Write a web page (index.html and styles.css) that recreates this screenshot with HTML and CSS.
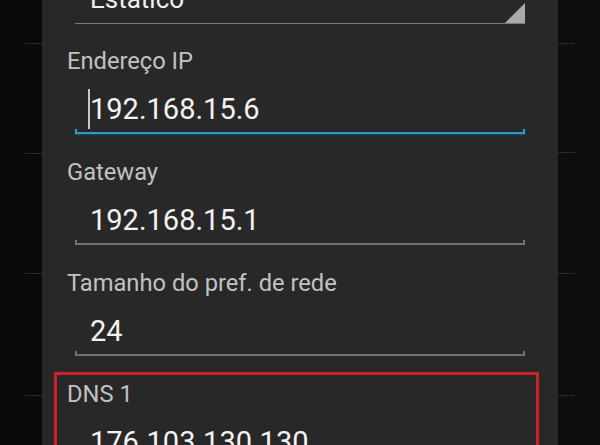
FILE: index.html
```html
<!DOCTYPE html>
<html lang="pt">
<head>
<meta charset="utf-8">
<title>IP estático</title>
<link rel="stylesheet" href="styles.css">
</head>
<body>
<div class="screen">
  <div class="gutter gutter-left"></div>
  <div class="panel">
    <div class="spinner">
      <span class="spinner-text">Estático</span>
      <svg class="spinner-arrow" width="20" height="20" viewBox="0 0 20 20"><polygon points="20,0 20,20 0,20" fill="#a9a9a9"/></svg>
    </div>
    <div class="field first">
      <div class="label">Endereço IP</div>
      <div class="input">
        <div class="value"><span class="cursor"></span>192.168.15.6</div>
        <div class="line active"></div>
      </div>
    </div>
    <div class="field">
      <div class="label">Gateway</div>
      <div class="input">
        <div class="value">192.168.15.1</div>
        <div class="line"></div>
      </div>
    </div>
    <div class="field">
      <div class="label">Tamanho do pref. de rede</div>
      <div class="input">
        <div class="value">24</div>
        <div class="line"></div>
      </div>
    </div>
    <div class="field highlight">
      <div class="label">DNS 1</div>
      <div class="input">
        <div class="value">176.103.130.130</div>
        <div class="line"></div>
      </div>
    </div>
  </div>
  <div class="gutter gutter-right"></div>
</div>
</body>
</html>
```

FILE: styles.css
```css
html, body {
  margin: 0;
  padding: 0;
  width: 600px;
  height: 445px;
  overflow: hidden;
  background: #0a0a0a;
  font-family: Roboto, "Noto Sans", "Liberation Sans", sans-serif;
}

.screen {
  display: grid;
  grid-template-columns: 42px 516px 42px;
  height: 445px;
}

.gutter-left {
  background:
    linear-gradient(#2a2a2a, #2a2a2a) 25px 43px / 17px 1px no-repeat,
    linear-gradient(#2a2a2a, #2a2a2a) 25px 153px / 17px 1px no-repeat,
    linear-gradient(#2a2a2a, #2a2a2a) 25px 273px / 17px 1px no-repeat,
    linear-gradient(#2a2a2a, #2a2a2a) 25px 395px / 17px 1px no-repeat,
    #0a0a0a;
}

.gutter-right {
  background:
    linear-gradient(#2a2c2e, #2a2c2e) 0 43px / 17px 1px no-repeat,
    linear-gradient(#2a2c2e, #2a2c2e) 0 152px / 17px 1px no-repeat,
    linear-gradient(#2a2c2e, #2a2c2e) 0 273px / 17px 1px no-repeat,
    linear-gradient(#2a2c2e, #2a2c2e) 0 395px / 17px 1px no-repeat,
    #0b0d0f;
}

.panel {
  background: #282828;
  padding: 0 33px 0 25px;
  overflow: hidden;
}

.spinner {
  margin: -18px 0 0 8px;
  padding-left: 15px;
  height: 41px;
  border-bottom: 1px solid #7a7a7a;
  display: flex;
  justify-content: space-between;
  align-items: flex-start;
}

.spinner-text {
  font-size: 26px;
  line-height: 34px;
  color: #f0f0f0;
}

.spinner-arrow {
  align-self: flex-end;
  display: block;
}

.field {
  margin-bottom: 22.6px;
}

.field.first {
  margin-top: 21.6px;
}

.label {
  font-size: 23.7px;
  line-height: 30px;
  color: #c2c2c2;
  white-space: nowrap;
}

.input {
  margin: 13.4px 0 0 8px;
}

.value {
  font-size: 29px;
  line-height: 40px;
  height: 40px;
  padding-left: 15px;
  color: #f3f3f3;
  white-space: nowrap;
}

.cursor {
  display: inline-block;
  width: 2px;
  height: 40px;
  margin-left: -2px;
  vertical-align: top;
  background: #c8c8c8;
}

.line {
  height: 3px;
  border: 2px solid #727272;
  border-top: 0;
}

.line.active {
  border-color: #3399c2;
  box-shadow: 0 1px 1px #16485a;
}

.field.highlight {
  margin: -7px -14px 0 -13px;
  padding: 4px 11px 0 10px;
  border: 3px solid #c0262c;
  box-shadow: 0 0 2px #6e1a1c, inset 0 0 2px #6e1a1c;
}
```
